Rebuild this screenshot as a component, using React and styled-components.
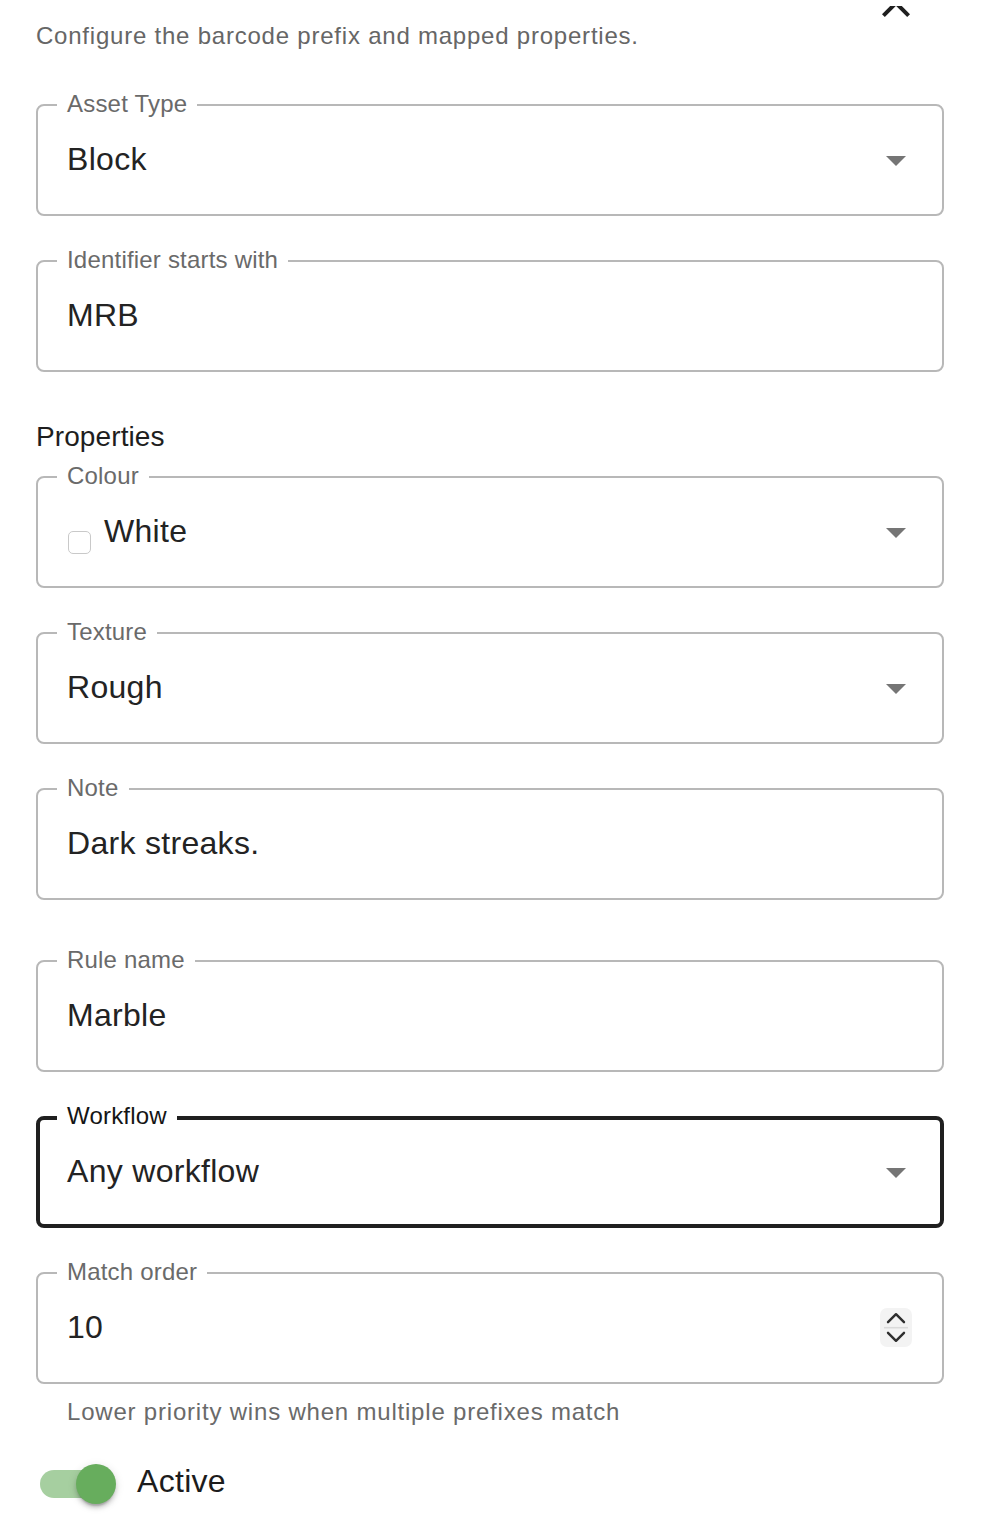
import React from "react";
import styled, { createGlobalStyle } from "styled-components";

const Global = createGlobalStyle`
  html, body { margin: 0; padding: 0; background: #fff; }
  body { font-family: "Liberation Sans", Arial, sans-serif; }
  * { box-sizing: border-box; }
`;

const Page = styled.div`
  position: relative;
  width: 986px;
  min-height: 1528px;
  padding: 18px 42px 0 36px;
  display: flex;
  flex-direction: column;
  overflow: hidden;
`;

const CloseButton = styled.button`
  position: absolute;
  top: 6px;
  left: 872px;
  width: 48px;
  height: 14px;
  padding: 0;
  border: 0;
  background: transparent;
  color: #1f1f1f;
  overflow: hidden;
  display: block;

  svg {
    display: block;
    margin-top: -27px;
  }
`;

const Description = styled.p`
  margin: 0;
  font-size: 24px;
  line-height: 36px;
  letter-spacing: 0.78px;
  color: #666;
`;

const SectionTitle = styled.h3`
  margin: 44px 0 0;
  font-size: 28px;
  line-height: 42px;
  font-weight: 400;
  letter-spacing: 0.1px;
  color: #1e1e1e;
`;

const FieldBox = styled.div`
  position: relative;
  width: 100%;
  height: 112px;
  margin-top: ${(p) => p.$mt}px;
  border: ${(p) => (p.$focused ? "4px solid #1f1f1f" : "2px solid #b8b8b8")};
  border-radius: 8px;
  display: flex;
  align-items: center;
  padding: ${(p) =>
    p.$focused ? "0 20px 2px 27px" : "0 22px 2px 29px"};
`;

const FieldLabel = styled.span`
  position: absolute;
  left: ${(p) => (p.$focused ? 17 : 19)}px;
  top: ${(p) => (p.$focused ? -16 : -14)}px;
  padding: 0 10px;
  background: #fff;
  font-size: 24px;
  line-height: 24px;
  letter-spacing: 0.2px;
  color: ${(p) => (p.$focused ? "#151515" : "#6a6a6a")};
  white-space: nowrap;
`;

const ValueRow = styled.div`
  flex: 1;
  display: flex;
  align-items: flex-end;
  gap: 13px;
  min-width: 0;
`;

const Value = styled.span`
  font-size: 32px;
  line-height: 46px;
  letter-spacing: 0.3px;
  color: #232323;
  white-space: nowrap;
`;

const CheckBox = styled.span`
  width: 23px;
  height: 23px;
  flex: 0 0 23px;
  margin-left: 1px;
  border: 1.5px solid #c9c9c9;
  border-radius: 5px;
  background: #fff;
`;

const ArrowIcon = styled.svg`
  width: 48px;
  height: 48px;
  margin-top: 2px;
  fill: #757575;
  flex: 0 0 48px;
`;

const Spinner = styled.span`
  width: 32px;
  height: 39px;
  margin-right: 8px;
  border-radius: 7px;
  background: #f3f3f3;
  display: flex;
  flex: 0 0 32px;
`;

const HelperText = styled.p`
  margin: 10px 0 0 31px;
  font-size: 24px;
  line-height: 36px;
  letter-spacing: 0.8px;
  color: #6a6a6a;
`;

const SwitchRow = styled.label`
  margin-top: 34px;
  display: flex;
  align-items: flex-start;
  gap: 21px;
  padding-left: 4px;
`;

const SwitchBase = styled.span`
  position: relative;
  width: 76px;
  height: 40px;
  flex: 0 0 76px;
`;

const Track = styled.span`
  position: absolute;
  left: 0;
  top: 6px;
  width: 68px;
  height: 28px;
  border-radius: 14px;
  background: #66ad5c;
  opacity: ${(p) => (p.$on ? 0.58 : 0.38)};
`;

const Thumb = styled.span`
  position: absolute;
  left: ${(p) => (p.$on ? 36 : 0)}px;
  top: 0;
  width: 40px;
  height: 40px;
  border-radius: 50%;
  background: #67ad5d;
  box-shadow: 0 4px 2px -2px rgba(0, 0, 0, 0.2), 0 4px 4px 0 rgba(0, 0, 0, 0.14),
    0 2px 10px 0 rgba(0, 0, 0, 0.12);
`;

const SwitchLabel = styled.span`
  font-size: 32px;
  line-height: 34px;
  letter-spacing: 0.3px;
  color: #1c1c1c;
`;

const DropArrow = () => (
  <ArrowIcon viewBox="0 0 24 24">
    <path d="M7 10l5 5 5-5z" />
  </ArrowIcon>
);

const NumberSpinner = () => (
  <Spinner>
    <svg width="32" height="39" viewBox="0 0 32 39" fill="none">
      <path d="M8 14.2 16 6.2 24 14.2" stroke="#2e2e2e" strokeWidth="2.4" strokeLinecap="round" strokeLinejoin="round" />
      <path d="M4 19.7H28" stroke="#dadada" strokeWidth="1.6" />
      <path d="M8 24.8 16 32.8 24 24.8" stroke="#2e2e2e" strokeWidth="2.4" strokeLinecap="round" strokeLinejoin="round" />
    </svg>
  </Spinner>
);

const Field = ({ label, value, kind, checkbox, focused, mt }) => (
  <FieldBox $focused={focused} $mt={mt}>
    <FieldLabel $focused={focused}>{label}</FieldLabel>
    <ValueRow>
      {checkbox && <CheckBox />}
      <Value>{value}</Value>
    </ValueRow>
    {kind === "select" && <DropArrow />}
    {kind === "number" && <NumberSpinner />}
  </FieldBox>
);

const topFields = [
  { label: "Asset Type", value: "Block", kind: "select", mt: 50 },
  { label: "Identifier starts with", value: "MRB", mt: 44 },
];

const propertyFields = [
  { label: "Colour", value: "White", kind: "select", checkbox: true, mt: 18 },
  { label: "Texture", value: "Rough", kind: "select", mt: 44 },
  { label: "Note", value: "Dark streaks.", mt: 44 },
  { label: "Rule name", value: "Marble", mt: 60 },
  { label: "Workflow", value: "Any workflow", kind: "select", focused: true, mt: 44 },
  { label: "Match order", value: "10", kind: "number", mt: 44 },
];

export default function App() {
  return (
    <>
      <Global />
      <Page>
        <CloseButton aria-label="close">
          <svg width="48" height="48" viewBox="0 0 24 24" fill="currentColor">
            <path d="M19 6.41 17.59 5 12 10.59 6.41 5 5 6.41 10.59 12 5 17.59 6.41 19 12 13.41 17.59 19 19 17.59 13.41 12z" />
          </svg>
        </CloseButton>
        <Description>Configure the barcode prefix and mapped properties.</Description>
        {topFields.map((f) => (
          <Field key={f.label} {...f} />
        ))}
        <SectionTitle>Properties</SectionTitle>
        {propertyFields.map((f) => (
          <Field key={f.label} {...f} />
        ))}
        <HelperText>Lower priority wins when multiple prefixes match</HelperText>
        <SwitchRow>
          <SwitchBase>
            <Track $on />
            <Thumb $on />
          </SwitchBase>
          <SwitchLabel>Active</SwitchLabel>
        </SwitchRow>
      </Page>
    </>
  );
}
